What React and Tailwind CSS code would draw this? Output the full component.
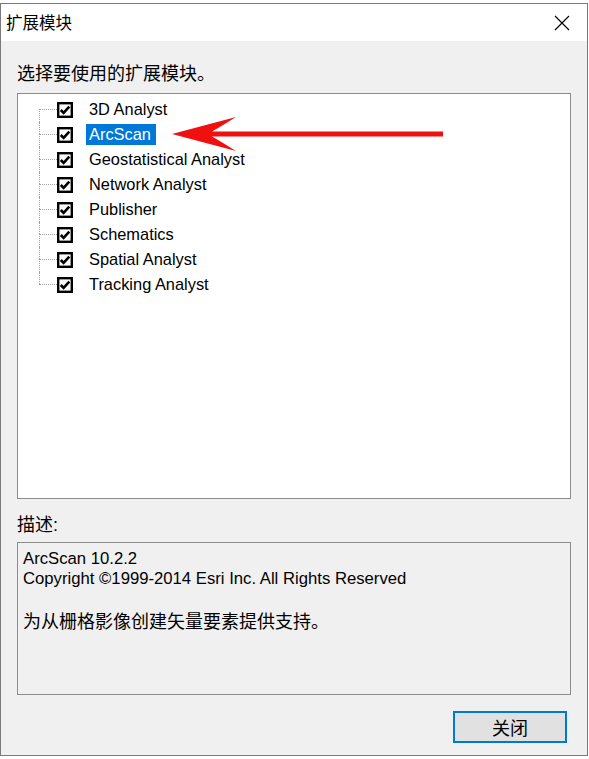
import React from "react";

const items = [
  "3D Analyst",
  "ArcScan",
  "Geostatistical Analyst",
  "Network Analyst",
  "Publisher",
  "Schematics",
  "Spatial Analyst",
  "Tracking Analyst",
];

const latin = { fontFamily: '"Liberation Sans", "Noto Sans CJK SC", sans-serif' };
const cjk = { fontFamily: '"Noto Sans CJK SC", "Liberation Sans", sans-serif' };

function CheckBox() {
  return (
    <svg width="16" height="16" viewBox="0 0 16 16" className="shrink-0">
      <rect x="1.2" y="1.2" width="13.6" height="13.6" fill="#fff" stroke="#000" strokeWidth="2.4" />
      <path d="M3.8 8 L6.6 10.9 L12.3 4.6" fill="none" stroke="#000" strokeWidth="2.6" />
    </svg>
  );
}

function TreeRow({ label, first, last, selected }) {
  return (
    <div className="flex items-center h-[25px]">
      {/* dotted tree connector */}
      <div className="w-[18px] self-stretch flex flex-col">
        <div className={"flex-1 " + (first ? "" : "border-l border-dotted border-[#a0a0a0]")} />
        <div
          className={
            "flex-1 border-t border-dotted border-[#a0a0a0] " +
            (last ? "" : "border-l")
          }
        />
      </div>
      <CheckBox />
      <div
        className={
          "ml-[13px] pl-[3px] pr-[5px] h-[21px] leading-[21px] text-[16.4px] " +
          (selected ? "bg-[#0078d7] text-white" : "text-black")
        }
        style={latin}
      >
        {label}
      </div>
    </div>
  );
}

export default function App() {
  return (
    <div className="w-[589px] h-[759px] bg-white pt-[3px] overflow-hidden">
      <div className="w-[588px] h-[753px] border border-[#7a7a7a] bg-[#f0f0f0] flex flex-col">
        {/* title bar */}
        <div className="h-[37px] bg-white flex items-center justify-between pl-[5px] pr-[17px]">
          <span className="text-[16.5px] text-black" style={cjk}>扩展模块</span>
          <svg width="16" height="16" viewBox="0 0 16 16">
            <path d="M1 1 L15 15 M15 1 L1 15" stroke="#000" strokeWidth="1.2" />
          </svg>
        </div>

        <div className="flex-1 flex flex-col px-[16px]">
          <div className="mt-[19px] h-[24px] leading-[24px] text-[18px] text-black" style={cjk}>
            选择要使用的扩展模块。
          </div>

          {/* tree */}
          <div className="relative mt-[9px] h-[406px] border border-[#8c8c8c] bg-white pt-[3px] pl-[21px]">
            {items.map((it, i) => (
              <TreeRow
                key={it}
                label={it}
                first={i === 0}
                last={i === items.length - 1}
                selected={it === "ArcScan"}
              />
            ))}
            <svg
              className="absolute left-[150px] top-[20px]"
              width="280"
              height="40"
              viewBox="0 0 280 40"
            >
              <path
                d="M4 20 L68 3 Q52 13 44 17.5 L275 17.5 L275 22.5 L44 22.5 Q52 27 68 37 Z"
                fill="#f01010"
              />
            </svg>
          </div>

          <div className="mt-[12px] h-[24px] leading-[24px] text-[18px] text-black" style={cjk}>
            描述<span style={latin}>:</span>
          </div>

          {/* description */}
          <div className="mt-[7px] h-[153px] border border-[#8c8c8c] bg-[#f0f0f0] pt-[6px] pl-[5px] text-black">
            <div className="text-[16.7px] leading-[20px]" style={latin}>ArcScan 10.2.2</div>
            <div className="text-[16.7px] leading-[20px]" style={latin}>
              Copyright ©1999-2014 Esri Inc. All Rights Reserved
            </div>
            <div className="h-[20px]" />
            <div className="text-[18px] leading-[22px]" style={cjk}>
              为从栅格影像创建矢量要素提供支持。
            </div>
          </div>

          <div className="mt-[16px] flex justify-end pr-[4px]">
            <button
              className="w-[114px] h-[32px] border-2 border-[#0078d7] bg-[#e1e1e1] text-[18px] text-black flex items-center justify-center"
              style={cjk}
            >
              关闭
            </button>
          </div>
        </div>
      </div>
    </div>
  );
}
